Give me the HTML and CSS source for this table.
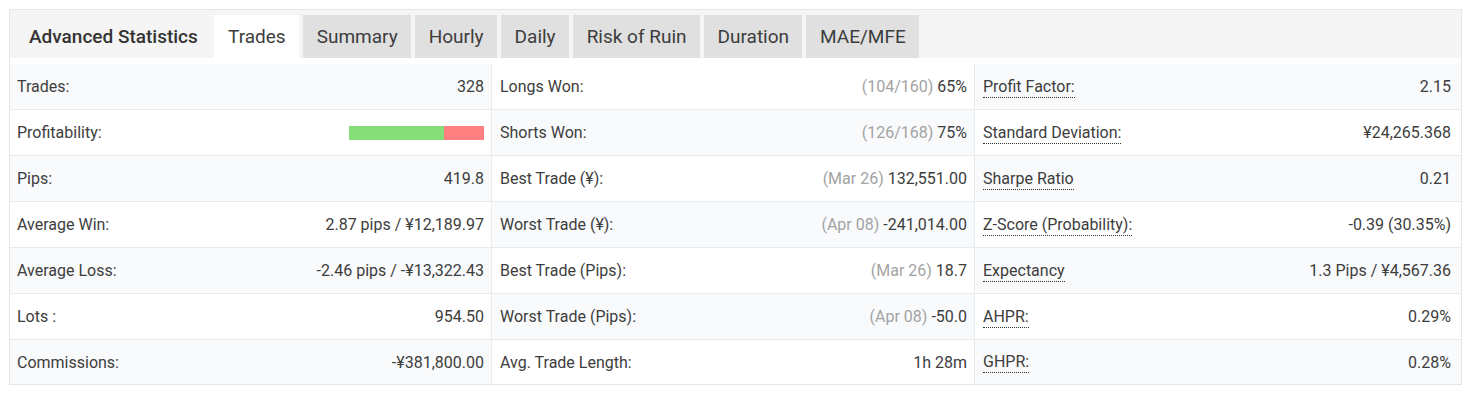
FILE: index.html
```html
<!DOCTYPE html>
<html>
<head>
<meta charset="utf-8">
<link rel="stylesheet" href="styles.css">
</head>
<body>
<div class="box">
  <div class="tabbar">
    <div class="title">Advanced Statistics</div>
    <div class="tab active">Trades</div>
    <div class="tab">Summary</div>
    <div class="tab">Hourly</div>
    <div class="tab">Daily</div>
    <div class="tab">Risk of Ruin</div>
    <div class="tab">Duration</div>
    <div class="tab">MAE/MFE</div>
  </div>
  <div class="grid">
    <div class="col odd-striped">
      <div class="row"><span>Trades:</span><span>328</span></div>
      <div class="row"><span>Profitability:</span><span class="bar"><span class="win" style="width:70%"></span><span class="loss"></span></span></div>
      <div class="row"><span>Pips:</span><span>419.8</span></div>
      <div class="row"><span>Average Win:</span><span>2.87 pips / ¥12,189.97</span></div>
      <div class="row"><span>Average Loss:</span><span>-2.46 pips / -¥13,322.43</span></div>
      <div class="row"><span>Lots :</span><span>954.50</span></div>
      <div class="row"><span>Commissions:</span><span>-¥381,800.00</span></div>
    </div>
    <div class="col even-striped">
      <div class="row"><span>Longs Won:</span><span><span class="muted">(104/160)</span> 65%</span></div>
      <div class="row"><span>Shorts Won:</span><span><span class="muted">(126/168)</span> 75%</span></div>
      <div class="row"><span>Best Trade (¥):</span><span><span class="muted">(Mar 26)</span> 132,551.00</span></div>
      <div class="row"><span>Worst Trade (¥):</span><span><span class="muted">(Apr 08)</span> -241,014.00</span></div>
      <div class="row"><span>Best Trade (Pips):</span><span><span class="muted">(Mar 26)</span> 18.7</span></div>
      <div class="row"><span>Worst Trade (Pips):</span><span><span class="muted">(Apr 08)</span> -50.0</span></div>
      <div class="row"><span>Avg. Trade Length:</span><span>1h 28m</span></div>
    </div>
    <div class="col odd-striped last">
      <div class="row"><span class="dotted">Profit Factor:</span><span>2.15</span></div>
      <div class="row"><span class="dotted">Standard Deviation:</span><span>¥24,265.368</span></div>
      <div class="row"><span class="dotted">Sharpe Ratio</span><span>0.21</span></div>
      <div class="row"><span class="dotted">Z-Score (Probability):</span><span>-0.39 (30.35%)</span></div>
      <div class="row"><span class="dotted">Expectancy</span><span>1.3 Pips / ¥4,567.36</span></div>
      <div class="row"><span class="dotted">AHPR:</span><span>0.29%</span></div>
      <div class="row"><span class="dotted">GHPR:</span><span>0.28%</span></div>
    </div>
  </div>
</div>
</body>
</html>
```
FILE: styles.css
```css
html, body {
  margin: 0;
  padding: 0;
  background: #fff;
}
body {
  padding: 9px;
  font-family: Roboto, "Liberation Sans", sans-serif;
  color: #3d3d3d;
}
.box {
  width: 1451px;
  border: 1px solid #e6e6e6;
  background: #fff;
}
.tabbar {
  display: flex;
  align-items: stretch;
  background: #f5f5f5;
  padding-top: 5px;
  height: 43px;
  gap: 4px;
}
.title {
  display: flex;
  align-items: center;
  font-size: 19px;
  font-weight: 500;
  color: #333;
  padding: 0 0 0 19px;
  width: 181px;
}
.tab {
  display: flex;
  align-items: center;
  font-size: 19px;
  color: #3d3d3d;
  background: #e0e0e0;
  padding: 0 13px 0 14px;
}
.tab.active {
  background: #fff;
}
.grid {
  display: grid;
  grid-template-columns: 481px 483px 1fr;
  margin-top: 6px;
}
.col + .col {
  border-left: 1px solid #e9ecef;
}
.row {
  display: flex;
  justify-content: space-between;
  align-items: center;
  height: 45px;
  padding: 0 7px 0 7px;
  font-size: 16px;
  border-bottom: 1px solid #e9ecef;
}
.row:last-child {
  border-bottom: none;
  height: 44px;
}
.col + .col .row {
  padding-left: 8px;
}
.col.last .row {
  padding-right: 10px;
}
.odd-striped .row:nth-child(odd),
.even-striped .row:nth-child(even) {
  background: #f9fafc;
}
.muted {
  color: #a3a3a3;
}
.dotted {
  border-bottom: 1px dotted #333;
  line-height: 19px;
  padding: 1px 0;
}
.bar {
  display: flex;
  width: 135px;
  height: 14px;
}
.win {
  background: #86de78;
  height: 100%;
}
.loss {
  flex: 1;
  background: #fd7f7f;
  height: 100%;
}
```
